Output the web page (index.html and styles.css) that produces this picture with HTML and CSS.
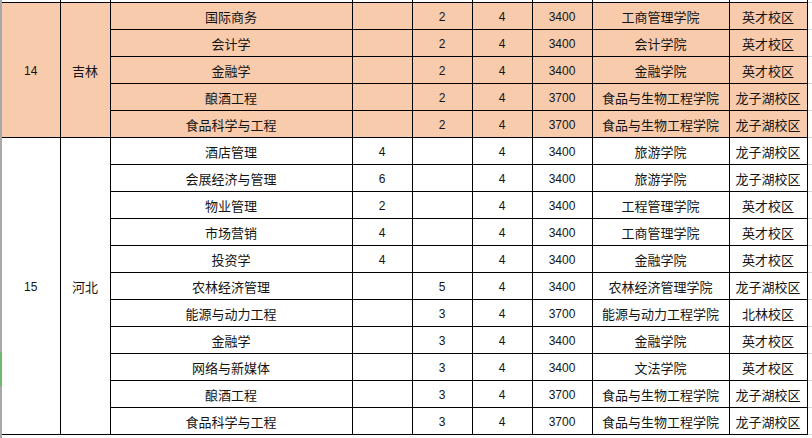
FILE: index.html
```html
<!DOCTYPE html>
<html lang="zh-CN">
<head>
<meta charset="utf-8">
<title>招生计划</title>
<link rel="stylesheet" href="styles.css">
</head>
<body>
<div class="page">
  <div class="edge"></div>
  <table class="sheet">
    <colgroup>
      <col class="c1"><col class="c2"><col class="c3"><col class="c4"><col class="c5"><col class="c6"><col class="c7"><col class="c8"><col class="c9"><col class="c10">
    </colgroup>
    <tbody>
      <tr class="stub"><td></td><td></td><td></td><td></td><td></td><td></td><td></td><td></td><td></td><td class="grid"></td></tr>
      <tr class="hl"><td rowspan="5" class="num">14</td><td rowspan="5">吉林</td><td>国际商务</td><td></td><td class="num">2</td><td class="num">4</td><td class="num">3400</td><td>工商管理学院</td><td>英才校区</td><td class="grid"></td></tr>
      <tr class="hl"><td>会计学</td><td></td><td class="num">2</td><td class="num">4</td><td class="num">3400</td><td>会计学院</td><td>英才校区</td><td class="grid"></td></tr>
      <tr class="hl"><td>金融学</td><td></td><td class="num">2</td><td class="num">4</td><td class="num">3400</td><td>金融学院</td><td>英才校区</td><td class="grid"></td></tr>
      <tr class="hl"><td>酿酒工程</td><td></td><td class="num">2</td><td class="num">4</td><td class="num">3700</td><td>食品与生物工程学院</td><td>龙子湖校区</td><td class="grid"></td></tr>
      <tr class="hl"><td>食品科学与工程</td><td></td><td class="num">2</td><td class="num">4</td><td class="num">3700</td><td>食品与生物工程学院</td><td>龙子湖校区</td><td class="grid"></td></tr>
      <tr><td rowspan="11" class="num">15</td><td rowspan="11">河北</td><td>酒店管理</td><td class="num">4</td><td></td><td class="num">4</td><td class="num">3400</td><td>旅游学院</td><td>龙子湖校区</td><td class="grid"></td></tr>
      <tr><td>会展经济与管理</td><td class="num">6</td><td></td><td class="num">4</td><td class="num">3400</td><td>旅游学院</td><td>龙子湖校区</td><td class="grid"></td></tr>
      <tr><td>物业管理</td><td class="num">2</td><td></td><td class="num">4</td><td class="num">3400</td><td>工程管理学院</td><td>英才校区</td><td class="grid"></td></tr>
      <tr><td>市场营销</td><td class="num">4</td><td></td><td class="num">4</td><td class="num">3400</td><td>工商管理学院</td><td>英才校区</td><td class="grid"></td></tr>
      <tr><td>投资学</td><td class="num">4</td><td></td><td class="num">4</td><td class="num">3400</td><td>金融学院</td><td>英才校区</td><td class="grid"></td></tr>
      <tr><td>农林经济管理</td><td></td><td class="num">5</td><td class="num">4</td><td class="num">3400</td><td>农林经济管理学院</td><td>龙子湖校区</td><td class="grid"></td></tr>
      <tr><td>能源与动力工程</td><td></td><td class="num">3</td><td class="num">4</td><td class="num">3700</td><td>能源与动力工程学院</td><td>北林校区</td><td class="grid"></td></tr>
      <tr><td>金融学</td><td></td><td class="num">3</td><td class="num">4</td><td class="num">3400</td><td>金融学院</td><td>英才校区</td><td class="grid"></td></tr>
      <tr><td>网络与新媒体</td><td></td><td class="num">3</td><td class="num">4</td><td class="num">3400</td><td>文法学院</td><td>英才校区</td><td class="grid"></td></tr>
      <tr><td>酿酒工程</td><td></td><td class="num">3</td><td class="num">4</td><td class="num">3700</td><td>食品与生物工程学院</td><td>龙子湖校区</td><td class="grid"></td></tr>
      <tr><td>食品科学与工程</td><td></td><td class="num">3</td><td class="num">4</td><td class="num">3700</td><td>食品与生物工程学院</td><td>龙子湖校区</td><td class="grid"></td></tr>
    </tbody>
  </table>
</div>
</body>
</html>
```

FILE: styles.css
```css
html, body {
  margin: 0;
  padding: 0;
  background: #ffffff;
}
.page {
  display: flex;
  align-items: flex-start;
  width: 812px;
  height: 438px;
  overflow: hidden;
}
.edge {
  flex: 0 0 2px;
  height: 438px;
  background: linear-gradient(to bottom, #a8a8a8 0, #a8a8a8 352px, #6fb86f 352px, #6fb86f 386px, #a8a8a8 386px);
}
.sheet {
  border-collapse: collapse;
  table-layout: fixed;
  width: 815px;
  font-family: "Noto Sans CJK SC", "Noto Sans", sans-serif;
  font-size: 13px;
  color: #141414;
}
.c1 { width: 58px; }
.c2 { width: 50px; }
.c3 { width: 242px; }
.c4 { width: 60px; }
.c5 { width: 60px; }
.c6 { width: 60px; }
.c7 { width: 60px; }
.c8 { width: 137px; }
.c9 { width: 78px; }
.c10 { width: 10px; }
.sheet td {
  border: 1px solid #000;
  text-align: center;
  vertical-align: middle;
  padding: 2px 0 0 0;
  line-height: 16px;
  white-space: nowrap;
  overflow: hidden;
}
.sheet td:first-child {
  border-left: none;
}
.sheet tr {
  height: 27px;
}
.sheet tr.stub {
  height: 2px;
}
.sheet tr.stub td {
  border-top: none;
  padding: 0;
  line-height: 0;
  height: 1px;
}
.hl td {
  background: #f8cbad;
}
.sheet td.grid {
  background: #ffffff;
  border-top: 1px solid #d6d6d6;
  border-bottom: 1px solid #d6d6d6;
  border-right: none;
}
.num {
  font-family: "Liberation Sans", "DejaVu Sans", sans-serif;
  font-size: 12px;
}
```
